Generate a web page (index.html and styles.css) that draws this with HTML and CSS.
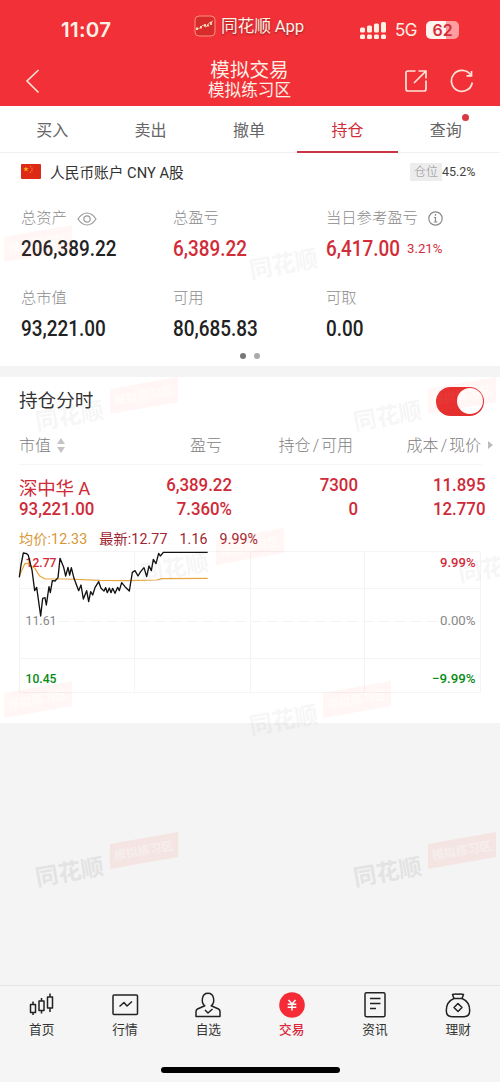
FILE: index.html
```html
<!DOCTYPE html>
<html lang="zh-CN">
<head>
<meta charset="utf-8">
<title>模拟交易</title>
<link rel="stylesheet" href="styles.css">
</head>
<body>
<div class="app">
  <header class="header">
    <div class="status">
      <span class="time">11:07</span>
      <span class="brand">
        <svg width="22" height="22" viewBox="0 0 22 22"><rect x="1" y="1" width="20" height="20" rx="4" fill="#d62d2c" stroke="#ff8d7e"/><path d="M2 14l4-1 3-3 3 2 3-4 4-2" fill="none" stroke="#f5b08e"/><path d="M3 12.500v2.500M7 11v2.500M11 9v2.500M14 9.500v2M17 7v3" stroke="#fff0d8" stroke-width="1.600"/></svg>
        <span>同花顺 App</span>
      </span>
      <svg class="signal" width="27" height="19" viewBox="0 0 27 19" fill="#fff0e6"><rect x="0" y="6.500" width="5" height="5" rx="1.500"/><rect x="7" y="4.500" width="5" height="7" rx="1.500"/><rect x="14" y="2.500" width="5" height="9" rx="1.500"/><rect x="21" y="1" width="5" height="10.500" rx="1.500"/><rect x="0" y="13.500" width="5" height="4.500" rx="1.500"/><rect x="7" y="13.500" width="5" height="4.500" rx="1.500"/><rect x="14" y="13.500" width="5" height="4.500" rx="1.500"/><rect x="21" y="13.500" width="5" height="4.500" rx="1.500"/></svg>
      <span class="net">5G</span>
      <span class="battery">62</span>
    </div>
    <div class="nav">
      <svg class="back" width="15" height="26" viewBox="0 0 15 26"><path d="M13.500 2L2 13l11.500 11.500" fill="none" stroke="#ffe4d8" stroke-width="1.600"/></svg>
      <div class="titles"><div class="title">模拟交易</div><div class="subtitle">模拟练习区</div></div>
      <svg class="share" width="24" height="24" viewBox="0 0 24 24" fill="none" stroke="#ffe4d8" stroke-width="1.700"><path d="M11.500 2H4Q2 2 2 4v16q0 2 2 2h16q2 0 2-2V11.500M10 14L21.500 2.500M14.500 2H22v7.500"/></svg>
      <svg class="reload" width="24" height="24" viewBox="0 0 24 24" fill="none" stroke="#ffe4d8" stroke-width="1.700"><path d="M22.300 13.500A10.500 10.500 0 1 1 20.500 5.800M21.500 2v4.800h-5"/></svg>
    </div>
  </header>

  <nav class="tabs">
    <span class="tab">买入</span><span class="tab">卖出</span><span class="tab">撤单</span><span class="tab on">持仓</span><span class="tab">查询<i class="dot"></i></span>
  </nav>

  <section class="account">
    <svg class="flag" width="20" height="15" viewBox="0 0 20 15"><rect width="20" height="15" rx="1" fill="#dd2a16"/><path d="M5 2.500l.7 1.800h2l-1.600 1.200.6 1.900L5 6.300 3.300 7.400l.6-1.900L2.300 4.300h2z" fill="#ffb21c"/><g fill="#f58a1c"><circle cx="9.500" cy="2.500" r=".7"/><circle cx="11" cy="4.300" r=".7"/><circle cx="11" cy="6.500" r=".7"/><circle cx="9.500" cy="8.300" r=".7"/></g></svg>
    <span class="acct-name">人民币账户 CNY A股</span>
    <span class="ratio"><b>仓位</b><span>45.2%</span></span>
  </section>

  <section class="summary">
    <div class="cell"><div class="label">总资产 <svg width="20" height="14" viewBox="0 0 20 14" fill="none" stroke="#999" stroke-width="1.200"><path d="M1 7Q5 1 10 1t9 6q-4 6-9 6T1 7z"/><circle cx="10" cy="7" r="3.200"/></svg></div><div class="value"><span class="din">206,389.22</span></div></div>
    <div class="cell"><div class="label">总盈亏</div><div class="value red"><span class="din">6,389.22</span></div></div>
    <div class="cell"><div class="label">当日参考盈亏 <svg width="15" height="15" viewBox="0 0 15 15" fill="none" stroke="#8a8a8a" stroke-width="1.200"><circle cx="7.500" cy="7.500" r="6.700"/><path d="M7.500 3v1.800M6 6.500h1.500V11M5.800 11h3.600"/></svg></div><div class="value red"><span class="din">6,417.00</span><span class="pct">3.21%</span></div></div>
    <div class="cell"><div class="label">总市值</div><div class="value"><span class="din">93,221.00</span></div></div>
    <div class="cell"><div class="label">可用</div><div class="value"><span class="din">80,685.83</span></div></div>
    <div class="cell"><div class="label">可取</div><div class="value"><span class="din">0.00</span></div></div>
    <div class="pager"><i class="on"></i><i></i></div>
  </section>

  <section class="holdings">
    <div class="h-head"><span>持仓分时</span><span class="toggle"></span></div>
    <div class="row cols">
      <span>市值 <svg width="8" height="15" viewBox="0 0 8 15" fill="#c4c4c4"><path d="M4 0l4 6H0zM4 15L0 9h8z"/></svg></span><span>盈亏</span><span>持仓<em>/</em>可用</span><span>成本<em>/</em>现价</span>
      <svg class="more" width="5" height="8" viewBox="0 0 5 8" fill="#bbb"><path d="M0 0l5 4-5 4z"/></svg>
    </div>
    <div class="row stock">
      <div><div class="name">深中华 A</div><div class="din">93,221.00</div></div>
      <div><div class="din">6,389.22</div><div class="din">7.360%</div></div>
      <div><div class="din">7300</div><div class="din">0</div></div>
      <div><div class="din">11.895</div><div class="din">12.770</div></div>
    </div>
    <div class="quote"><span class="avg">均价:12.33</span><span>最新:12.77</span><span>1.16</span><span>9.99%</span></div>
    <svg class="chart" width="500" height="150" viewBox="0 549 500 150">
      <g fill="none" stroke="#f4f4f4"><path d="M19.500 551.500h461v141h-461zM134.500 551v141M250.500 551v141M364.500 551v141M19 588.500h462M19 658.500h462"/><path d="M58 621.500h380" stroke-dasharray="12 4"/></g>
      <g class="axis"><text x="25.500" y="566.500" fill="#d42738" textLength="31" lengthAdjust="spacingAndGlyphs">12.77</text><text class="mid" x="25.500" y="624.500" fill="#888" textLength="31" lengthAdjust="spacingAndGlyphs">11.61</text><text x="25.500" y="683" fill="#078b17" textLength="31" lengthAdjust="spacingAndGlyphs">10.45</text>
      <text x="440" y="566.500" fill="#d42738" textLength="35.500" lengthAdjust="spacingAndGlyphs">9.99%</text><text class="mid" x="440" y="624.500" fill="#888" textLength="35.500" lengthAdjust="spacingAndGlyphs">0.00%</text><text x="432" y="683" fill="#078b17" textLength="43.500" lengthAdjust="spacingAndGlyphs">−9.99%</text></g>
      <g transform="translate(0 530) scale(.33333)" fill="none" stroke-linejoin="round">
        <path d="M58 138L75 100L88 101L96 110L105 115L118 137L135 147H200L300 151L380 152L470 150L485 146L623 145" stroke="#e9a640" stroke-width="3.600"/>
        <path d="M58 142L63 105L70 69L80 71L85 76L92 105L96 120L104 182L110 172L122 258L128 205L135 203L139 225L147 170L151 188L157 152L165 153L174 143L180 85L191 112L197 138L204 112L209 135L214 113L222 145L236 182L243 165L250 207L260 182L266 215L272 185L278 195L285 173L296 155L303 175L312 183L317 173L322 188L328 174L333 188L338 175L345 190L353 172L358 182L365 158L375 170L388 183L397 127L405 122L414 138L422 125L432 113L440 140L447 108L454 122L460 88L468 101L476 70L481 78L490 67H623" stroke="#111" stroke-width="4"/>
      </g>
    </svg>
  </section>

  <nav class="bottom">
    <a><svg width="28" height="28" viewBox="0 0 28 28"><path d="M2.500 13.500h5v8h-5zM11 10h5v9.500h-5zM19.500 6h5v11h-5zM5 10.500v3m0 8V24M13.500 7v3m0 9.500v3M22 2.500V6m0 11v4"/></svg>首页</a>
    <a><svg width="28" height="28" viewBox="0 0 28 28"><rect x="2" y="4" width="24.500" height="19.500" rx="1"/><path d="M8.500 15.500l4.500-4 3 3.500 5-4.500"/></svg>行情</a>
    <a><svg width="28" height="28" viewBox="0 0 28 28"><path d="M10.800 14.800C7 12 7.200 2.300 14 2.300s7 9.700 3.200 12.500l7.300 3.200q1.500.7 1.500 2.500v5H2v-5q0-1.800 1.500-2.500zM11 19l3 3 4.500-4"/></svg>自选</a>
    <a class="active"><svg width="28" height="28" viewBox="0 0 28 28"><circle cx="14" cy="14" r="12.800" fill="#f52b37" stroke="none"/><path d="M10.500 9l3.500 4 3.500-4M14 13v6.500M9.700 13.200h8.600M9.700 16.200h8.600" stroke="#fff"/></svg>交易</a>
    <a><svg width="28" height="28" viewBox="0 0 28 28"><rect x="4" y="1.700" width="20" height="24" rx="1.500"/><path d="M9 7.500h10.500M9 12.500h10.500M9 17.500h6"/></svg>资讯</a>
    <a><svg width="28" height="28" viewBox="0 0 28 28"><path d="M8.500 3.500q2.800-1 5.500-.3 2.800-.7 5.500.3L18 7.500h-8zM10 7.500C4 10 2.300 14.500 2.300 19.500c0 4.500 1.700 6.200 5.700 6.200h12c4 0 5.700-1.700 5.700-6.200 0-5-1.700-9.500-7.700-12M14 12.500l4 4-4 4-4-4z"/></svg>理财</a>
    <i class="home"></i>
  </nav>

  <svg class="marks" width="500" height="1082" viewBox="0 0 500 1082">
    <defs><g id="wt"><text x="0" y="0" font-size="23" fill="#777" transform="rotate(-10)">同花顺</text></g>
    <g id="wp"><path d="M0 12L68 0V25L0 37z" fill="#ff6a50"/><text x="5" y="28" font-size="12" fill="#fff" fill-opacity=".6" transform="rotate(-10 5 28)">模拟练习区</text></g></defs>
    <g opacity=".07"><use href="#wt" x="251" y="278"/><use href="#wt" x="37" y="430"/><use href="#wt" x="355" y="430"/><use href="#wt" x="142" y="582"/><use href="#wt" x="460" y="582"/><use href="#wt" x="251" y="734"/></g>
    <g opacity=".06"><use href="#wp" x="4" y="225"/><use href="#wp" x="110" y="377"/><use href="#wp" x="428" y="377"/><use href="#wp" x="216" y="528"/><use href="#wp" x="4" y="681"/><use href="#wp" x="323" y="681"/></g>
    <g opacity=".13"><use href="#wt" x="37" y="886"/><use href="#wt" x="355" y="886"/></g>
    <g opacity=".1"><use href="#wp" x="110" y="832"/><use href="#wp" x="428" y="832"/></g>
  </svg>
</div>
</body>
</html>
```
FILE: styles.css
```css
* { box-sizing: border-box; }
body { margin: 0; background: #f4f4f4; font-family: Roboto, "Noto Sans CJK SC", sans-serif; font-weight: 400; color: #222; }
.app { position: relative; width: 500px; height: 1082px; display: flex; flex-direction: column; overflow: hidden; }
svg { flex: none; }
.header { height: 106px; background: #f13038; color: #fff0e6; }
.status { height: 55px; display: flex; align-items: center; padding: 5px 40px 0 61px; }
.time { width: 133px; padding-top: 0; font: 600 20.500px/24px Inter, sans-serif; letter-spacing: .3px; }
.brand { display: flex; align-items: center; gap: 5px; width: 166px; margin-top: -9px; font-size: 16.800px; line-height: 22px; letter-spacing: -.2px; white-space: nowrap; text-shadow: 0 1px 2px #8a2020; }
.net { margin-left: 8px; font: 400 17px/20px Inter, sans-serif; letter-spacing: -.7px; width: 23px; flex: none; white-space: nowrap; }
.battery { margin-left: 8px; width: 33px; height: 18px; flex: none; border-radius: 5px; background: linear-gradient(90deg, #fff4f0 62%, #ff9d9f 62%); color: #d52d3c; font: 600 16px/18px Inter, sans-serif; text-align: center; }
.nav { height: 51px; display: grid; grid-template-columns: 14px 1fr 24px 22px 24px; align-items: center; padding: 0 26px 0 25px; }
.titles { grid-column: 2; margin-top: -2px; padding-left: 72px; padding-right: 16px; text-align: center; white-space: nowrap; }
.title { font-size: 19.600px; line-height: 23px; font-weight: 400; }
.subtitle { font-size: 16.600px; line-height: 18px; }
.share { grid-column: 3; }
.reload { grid-column: 5; }
.tabs { height: 47px; flex: none; display: flex; padding: 0 5px 0 3px; background: #fff; border-bottom: 1px solid #f2f2f2; }
.tab { position: relative; flex: 1; text-align: center; font-size: 16px; line-height: 50px; color: #666; }
.tab.on { color: #d12c39; }
.tab.on::after { content: ""; position: absolute; left: -1px; right: -1px; top: 45px; height: 2px; background: #cb3542; }
.dot { position: absolute; right: 26px; top: 8px; width: 7px; height: 7px; border-radius: 50%; background: #d93940; }
.account { height: 37px; display: flex; align-items: center; padding: 0 22px 0 21px; background: #fff; }
.acct-name { margin-left: 9px; font-size: 14.700px; color: #333; white-space: nowrap; }
.ratio { margin-left: auto; display: flex; align-items: center; font-size: 12.500px; line-height: 18px; color: #444; }
.ratio b { font-weight: 300; font-size: 12px; background: #ededed; color: #888; padding: 0 4px 0 4px; }
.ratio span { width: 36px; white-space: nowrap; }
.summary { height: 176px; background: #fff; padding: 18px 0 0 21px; display: grid; grid-template-columns: 152px 153px 1fr; grid-template-rows: 80px 67px 10px; }
.label { height: 21px; display: flex; align-items: center; gap: 10px; font-size: 15.300px; line-height: 21px; color: #8c8c8c; font-weight: 300; white-space: nowrap; }
.value { height: 38px; display: flex; align-items: center; font-size: 21.500px; font-weight: 500; white-space: nowrap; }
.din { transform: scaleX(.88); transform-origin: left center; }
.red { color: #d12c38; }
.value .pct { font-size: 13.500px; font-weight: 400; margin-left: -3px; transform: scaleX(.98); transform-origin: left center; }
.pager { grid-column: 1 / 4; display: flex; gap: 8px; padding-left: 219px; margin-top: -2px; }
.pager i { width: 6px; height: 6px; border-radius: 50%; background: #aaa; }
.pager .on { background: #777; }
.holdings { margin-top: 11px; height: 346px; background: #fff; }
.h-head { height: 48px; display: flex; justify-content: space-between; align-items: center; padding: 0 16px 0 19px; font-size: 18.600px; line-height: 26px; color: #333; }
.toggle { width: 48px; height: 29px; border-radius: 15px; background: #e52e2e; display: flex; justify-content: flex-end; padding: 1.500px; }
.toggle::before { content: ""; width: 26px; height: 26px; border-radius: 50%; background: #fff; }
.row { position: relative; display: grid; margin-left: 19px; width: 468px; }
.cols { grid-template-columns: 96px 107px 131px 128px; height: 40px; line-height: 41px; font-size: 16px; font-weight: 300; color: #808080; }
.cols span { text-align: right; white-space: nowrap; }
.cols span:first-child { text-align: left; display: flex; align-items: center; gap: 6px; }
.cols em { font-style: normal; padding: 0 2px; }
.more { position: absolute; right: -6px; top: 16px; }
.cols::after { content: ""; position: absolute; left: 0; right: 5px; bottom: 0; height: 1px; background: #f6f6f6; }
.stock { grid-template-columns: 96px 117px 126px 127.500px; height: 60px; padding-top: 8px; color: #cf2a38; font-size: 18.500px; line-height: 24px; font-weight: 500; text-align: right; white-space: nowrap; }
.stock .din { transform: scaleX(.91); transform-origin: right center; }
.stock > div:first-child, .stock > div:first-child .din { text-align: left; transform-origin: left center; }
.stock .name { font-size: 18.500px; font-weight: 400; letter-spacing: -.2px; transform: translateY(4px); }
.quote { height: 24px; padding: 3px 0 0 19px; display: flex; gap: 12px; font-size: 14.200px; line-height: 22px; letter-spacing: .1px; color: #9f2430; white-space: nowrap; }
.quote .avg { color: #d99635; }
.chart { display: block; }
.axis { font-size: 13px; font-weight: 500; }
.axis .mid { font-weight: 400; }
.bottom { position: relative; height: 97px; margin-top: auto; display: flex; background: #f5f5f5; border-top: 1px solid #e4e4e4; }
.bottom a { width: 83.330px; padding-top: 5px; display: flex; flex-direction: column; align-items: center; font-size: 12.700px; line-height: 21px; color: #333; }
.bottom svg { fill: none; stroke: #222; stroke-width: 1.500; stroke-linejoin: round; }
.bottom .active { color: #d9283c; font-weight: 500; }
.home { position: absolute; left: 161px; top: 81px; width: 179px; height: 6px; border-radius: 3px; background: #000; }
.marks { position: absolute; left: 0; top: 0; pointer-events: none; font-weight: 700; }
```
